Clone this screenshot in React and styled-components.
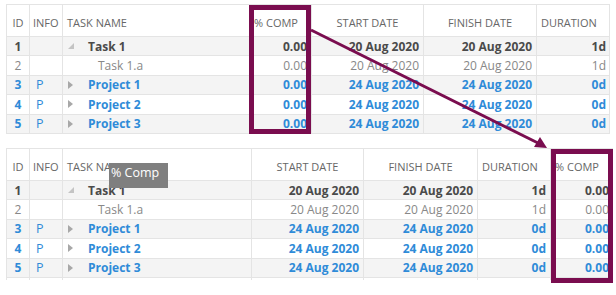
import React from 'react';
import styled, { createGlobalStyle } from 'styled-components';

const GlobalStyle = createGlobalStyle`
  html, body {
    margin: 0;
    padding: 0;
    background: #ffffff;
    font-family: 'Open Sans', 'Liberation Sans', sans-serif;
  }
`;

const MAROON = '#7a0d4f';
const BLUE = '#2f8bd8';

const Page = styled.div`
  position: relative;
  width: 616px;
  height: 295px;
  overflow: hidden;
`;

const TableWrap = styled.div`
  margin-left: 6px;
  margin-top: ${(p) => p.$top}px;
  width: ${(p) => p.$width}px;
  height: ${(p) => p.$height}px;
  overflow: hidden;
  border-top: 1px solid #e4e4e4;
  border-left: 1px solid #e4e4e4;
  border-right: ${(p) => (p.$open ? 'none' : '1px solid #e4e4e4')};
  box-sizing: border-box;
`;

const Row = styled.div`
  display: grid;
  grid-template-columns: ${(p) => p.$cols};
  height: ${(p) => (p.$header ? 32 : 19.4)}px;
  box-sizing: border-box;
  border-bottom: 1px solid #e4e4e4;
  background: ${(p) => (p.$shade ? '#f4f4f4' : '#ffffff')};
`;

const HeadCell = styled.div`
  display: flex;
  align-items: center;
  justify-content: ${(p) => p.$align || 'flex-start'};
  padding: 3px 2px 0 ${(p) => p.$pl ?? 5}px;
  border-right: ${(p) => (p.$last ? 'none' : '1px solid #e4e4e4')};
  border-left: ${(p) => (p.$drop ? '1px solid #f2c200' : 'none')};
  font-size: 11px;
  color: #676767;
  white-space: nowrap;
  overflow: hidden;
`;

const Cell = styled.div`
  display: flex;
  align-items: center;
  justify-content: ${(p) => p.$align || 'flex-start'};
  padding: 0 ${(p) => p.$pr ?? 4}px 0 ${(p) => p.$pl ?? 5}px;
  border-right: ${(p) => (p.$last ? 'none' : '1px solid #e4e4e4')};
  border-left: ${(p) => (p.$drop ? '1px solid #f2c200' : 'none')};
  font-size: 12px;
  font-weight: ${(p) => (p.$kind === 'sub' ? 400 : 700)};
  color: ${(p) => (p.$kind === 'sub' ? '#888888' : p.$kind === 'link' ? BLUE : '#4a4a4a')};
  white-space: nowrap;
  overflow: hidden;
`;

const Info = styled.span`
  font-weight: 400;
  color: ${BLUE};
  font-size: 12.5px;
`;

const Toggle = styled.span`
  display: inline-flex;
  width: 18px;
  margin-left: ${(p) => (p.$indent ? 10 : 0)}px;
  margin-right: 2px;
  flex: none;
`;

const HighlightBox = styled.div`
  position: absolute;
  left: ${(p) => p.$x}px;
  top: ${(p) => p.$y}px;
  width: ${(p) => p.$w}px;
  height: ${(p) => p.$h}px;
  border: 5px solid ${MAROON};
  box-sizing: border-box;
  pointer-events: none;
`;

const DragGhost = styled.div`
  position: absolute;
  left: 109px;
  top: 163px;
  width: 59px;
  height: 25px;
  background: #7f7f7f;
  color: #ffffff;
  font-size: 12.5px;
  padding: 1px 0 0 2px;
  box-sizing: border-box;
`;

const ArrowLayer = styled.svg`
  position: absolute;
  left: 0;
  top: 0;
  pointer-events: none;
`;

const tasks = [
  { id: 1, name: 'Task 1', info: '', kind: 'parent', pct: '0.00', start: '20 Aug 2020', finish: '20 Aug 2020', dur: '1d' },
  { id: 2, name: 'Task 1.a', info: '', kind: 'sub', pct: '0.00', start: '20 Aug 2020', finish: '20 Aug 2020', dur: '1d' },
  { id: 3, name: 'Project 1', info: 'P', kind: 'link', pct: '0.00', start: '24 Aug 2020', finish: '24 Aug 2020', dur: '0d' },
  { id: 4, name: 'Project 2', info: 'P', kind: 'link', pct: '0.00', start: '24 Aug 2020', finish: '24 Aug 2020', dur: '0d' },
  { id: 5, name: 'Project 3', info: 'P', kind: 'link', pct: '0.00', start: '24 Aug 2020', finish: '24 Aug 2020', dur: '0d' },
];

const Expanded = () => (
  <svg width="6" height="6" viewBox="0 0 6 6">
    <path d="M6 0 L6 6 L0 6 Z" fill="#c4c4c4" />
  </svg>
);

const Collapsed = () => (
  <svg width="5" height="8" viewBox="0 0 5 8">
    <path d="M0 0 L5 4 L0 8 Z" fill="#a8a8a8" />
  </svg>
);

const NameCell = ({ t }) => (
  <Cell $kind={t.kind} $pl={5}>
    <Toggle $indent={t.kind === 'sub'}>
      {t.kind === 'parent' && <Expanded />}
      {t.kind === 'link' && <Collapsed />}
    </Toggle>
    {t.name}
  </Cell>
);

const COLUMNS = {
  id: { head: 'ID', align: 'center', pl: 2 },
  info: { head: 'INFO', align: 'flex-start', pl: 3 },
  name: { head: 'TASK NAME', align: 'flex-start', pl: 4 },
  pct: { head: '% COMP', align: 'flex-start', pl: 3 },
  start: { head: 'START DATE', align: 'center', pl: 2 },
  finish: { head: 'FINISH DATE', align: 'center', pl: 2 },
  dur: { head: 'DURATION', align: 'flex-start', pl: 4 },
};

const renderCell = (key, t, last, drop) => {
  if (key === 'id') return <Cell key={key} $kind={t.kind} $align="center" $pl={3} $pr={3}>{t.id}</Cell>;
  if (key === 'info') return <Cell key={key} $kind={t.kind} $pl={6}><Info>{t.info}</Info></Cell>;
  if (key === 'name') return <NameCell key={key} t={t} />;
  return (
    <Cell key={key} $kind={t.kind} $align="flex-end" $last={last} $drop={drop}>
      {t[key]}
    </Cell>
  );
};

const Grid = ({ order, widths, top, width, height, open, dropKey, extraRow }) => {
  const cols = widths.map((w) => `${w}px`).join(' ');
  return (
    <TableWrap $top={top} $width={width} $height={height} $open={open}>
      <Row $header $cols={cols}>
        {order.map((key, i) => (
          <HeadCell
            key={key}
            $align={COLUMNS[key].align}
            $pl={COLUMNS[key].pl}
            $last={i === order.length - 1}
            $drop={key === dropKey}
          >
            {COLUMNS[key].head}
          </HeadCell>
        ))}
      </Row>
      {tasks.map((t, r) => (
        <Row key={t.id} $cols={cols} $shade={r % 2 === 0}>
          {order.map((key, i) => renderCell(key, t, i === order.length - 1, key === dropKey))}
        </Row>
      ))}
      {extraRow && (
        <Row $cols={cols}>
          {order.map((key, i) => (
            <Cell key={key} $last={i === order.length - 1} $drop={key === dropKey} />
          ))}
        </Row>
      )}
    </TableWrap>
  );
};

export default function App() {
  return (
    <Page>
      <GlobalStyle />
      <Grid
        order={['id', 'info', 'name', 'pct', 'start', 'finish', 'dur']}
        widths={[23, 33, 188, 61, 112, 113, 73]}
        top={4}
        width={604}
        height={130}
      />
      <Grid
        order={['id', 'info', 'name', 'start', 'finish', 'dur', 'pct']}
        widths={[23, 33, 189, 112, 114, 73, 62]}
        top={14}
        width={607}
        height={132}
        open
        dropKey="pct"
        extraRow
      />

      <HighlightBox $x={249} $y={5} $w={62} $h={129} />
      <HighlightBox $x={551} $y={149} $w={62} $h={134} />

      <ArrowLayer width="616" height="295" viewBox="0 0 616 295">
        <line x1="311" y1="30" x2="538" y2="143" stroke={MAROON} strokeWidth="3" />
        <path d="M547 148 L534 147 L540 137 Z" fill={MAROON} />
      </ArrowLayer>

      <DragGhost>% Comp</DragGhost>
    </Page>
  );
}
